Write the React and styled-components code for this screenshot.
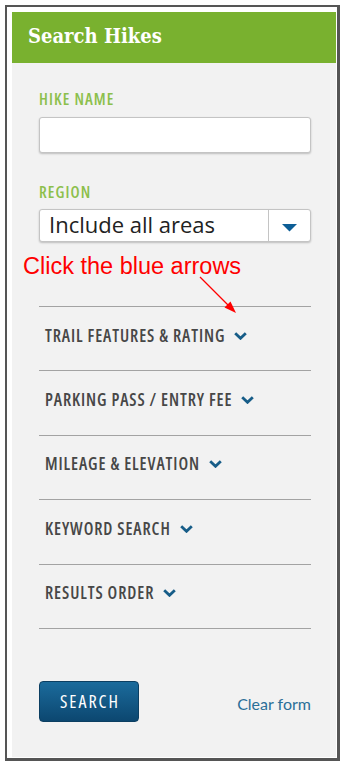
import React from "react";
import styled, { createGlobalStyle } from "styled-components";

const GlobalStyle = createGlobalStyle`
  html, body { margin: 0; padding: 0; background: #ffffff; }
  * { box-sizing: border-box; }
`;

const Frame = styled.div`
  margin: 5px 0 0 5px;
  width: 335px;
  height: 756px;
  background: #ffffff;
  border: 2px solid #555555;
  border-right-width: 3px;
  border-bottom-width: 3px;
  padding: 5px 1px 1px 5px;
`;

const Panel = styled.div`
  height: 100%;
  background: #f2f2f2;
  display: flex;
  flex-direction: column;
`;

const Header = styled.div`
  height: 51px;
  background: #79b12f;
  display: flex;
  align-items: center;
  padding: 0 0 3px 16px;
`;

const Title = styled.h2`
  margin: 0;
  font-family: "DejaVu Serif", serif;
  font-stretch: semi-condensed;
  font-weight: 700;
  font-size: 20px;
  color: #ffffff;
`;

const Body = styled.div`
  padding: 0 25px 0 27px;
  display: flex;
  flex-direction: column;
`;

const Label = styled.label`
  display: block;
  margin: ${(p) => p.$top}px 0 ${(p) => p.$bottom}px;
  font-family: "Open Sans", sans-serif;
  font-stretch: condensed;
  font-weight: 600;
  font-size: 16px;
  line-height: 20px;
  letter-spacing: 1.1px;
  color: #8cbf4c;
`;

const TextInput = styled.input`
  display: block;
  width: 100%;
  height: 36px;
  margin: 0;
  background: #ffffff;
  border: 1px solid #c4c4c4;
  border-radius: 3px;
  box-shadow: 0 1px 2px rgba(0, 0, 0, 0.22);
  outline: none;
`;

const Select = styled.div`
  display: flex;
  height: 33px;
  background: #ffffff;
  border: 1px solid #c4c4c4;
  border-radius: 3px;
  box-shadow: 0 1px 2px rgba(0, 0, 0, 0.22);
`;

const SelectValue = styled.div`
  flex: 1;
  display: flex;
  align-items: center;
  padding: 0 0 3px 9px;
  font-family: "Open Sans", sans-serif;
  font-size: 22px;
  color: #222222;
  white-space: nowrap;
`;

const SelectButton = styled.div`
  width: 42px;
  border-left: 1px solid #c4c4c4;
  display: flex;
  align-items: center;
  justify-content: center;
  padding-top: 4px;
`;

const Note = styled.div`
  position: relative;
  margin: 11px 0 26px -16px;
  font-family: "Liberation Sans", Arial, sans-serif;
  font-size: 23.5px;
  line-height: 27px;
  color: #ff0000;
  white-space: nowrap;
`;

const NoteArrow = styled.svg`
  position: absolute;
  left: 170px;
  top: 20px;
  overflow: visible;
`;

const Sections = styled.div`
  border-bottom: 1px solid #a3a3a3;
`;

const Section = styled.div`
  height: 64.4px;
  border-top: 1px solid #a3a3a3;
  display: flex;
  align-items: center;
  padding: 0 0 6px 6px;
`;

const SectionTitle = styled.span`
  font-family: "Open Sans", sans-serif;
  font-stretch: condensed;
  font-weight: 600;
  font-size: 17px;
  line-height: 22px;
  letter-spacing: 0.9px;
  color: #474747;
  white-space: nowrap;
`;

const Chevron = styled.svg`
  margin-left: 9px;
  flex: none;
`;

const Actions = styled.div`
  margin-top: 52px;
  display: flex;
  align-items: center;
  justify-content: space-between;
`;

const SearchButton = styled.button`
  width: 100px;
  height: 41px;
  border: 1px solid #0c3f62;
  border-radius: 4px;
  background: linear-gradient(#1b6b9c, #0c4770);
  color: #ffffff;
  font-family: "Open Sans", sans-serif;
  font-stretch: condensed;
  font-weight: 500;
  font-size: 18px;
  letter-spacing: 2px;
  padding: 0 0 0 2px;
  cursor: pointer;
`;

const ClearLink = styled.a`
  font-family: Lato, sans-serif;
  font-size: 16px;
  color: #2a6f98;
  text-decoration: none;
  padding-top: 4px;
`;

const sections = [
  "TRAIL FEATURES & RATING",
  "PARKING PASS / ENTRY FEE",
  "MILEAGE & ELEVATION",
  "KEYWORD SEARCH",
  "RESULTS ORDER",
];

function ChevronIcon() {
  return (
    <Chevron width="13" height="8" viewBox="0 0 13 8">
      <path d="M1.2 1.2 L6.5 6.3 L11.8 1.2" fill="none" stroke="#175d88" strokeWidth="2.8" strokeLinecap="butt" strokeLinejoin="miter" />
    </Chevron>
  );
}

export default function App() {
  return (
    <>
      <GlobalStyle />
      <Frame>
        <Panel>
          <Header>
            <Title>Search Hikes</Title>
          </Header>
          <Body>
            <Label $top={26} $bottom={8}>HIKE NAME</Label>
            <TextInput type="text" />
            <Label $top={29} $bottom={7}>REGION</Label>
            <Select>
              <SelectValue>Include all areas</SelectValue>
              <SelectButton>
                <svg width="15" height="8" viewBox="0 0 15 8">
                  <path d="M0 0 H15 L7.5 7.5 Z" fill="#0d5e96" />
                </svg>
              </SelectButton>
            </Select>
            <Note>
              Click the blue arrows
              <NoteArrow width="50" height="50" viewBox="0 0 50 50">
                <line x1="7" y1="4" x2="37" y2="34" stroke="#ff0000" strokeWidth="1.3" />
                <path d="M43 40 L31.5 34.5 L37.5 28.5 Z" fill="#ff0000" />
              </NoteArrow>
            </Note>
            <Sections>
              {sections.map((s) => (
                <Section key={s}>
                  <SectionTitle>{s}</SectionTitle>
                  <ChevronIcon />
                </Section>
              ))}
            </Sections>
            <Actions>
              <SearchButton type="button">SEARCH</SearchButton>
              <ClearLink href="#">Clear form</ClearLink>
            </Actions>
          </Body>
        </Panel>
      </Frame>
    </>
  );
}
